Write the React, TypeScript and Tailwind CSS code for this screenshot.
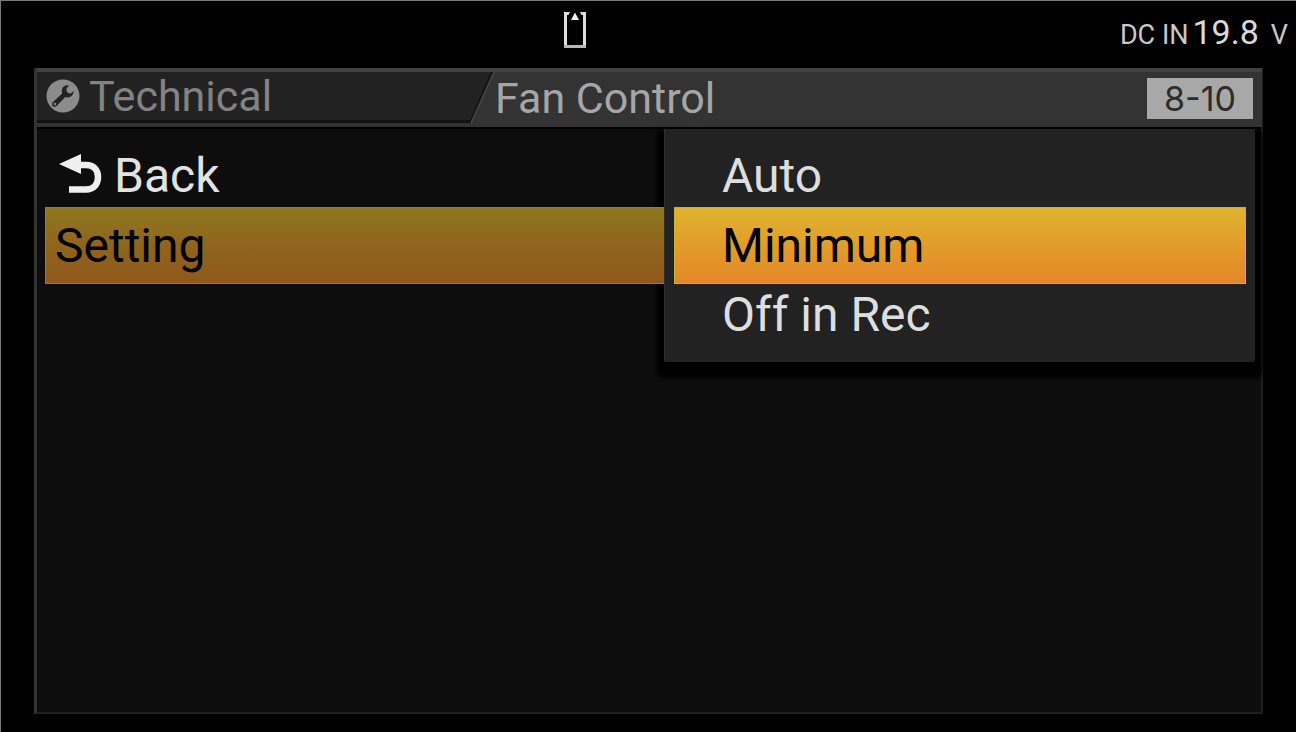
import { useState } from 'react'

const options = ['Auto', 'Minimum', 'Off in Rec']

export default function App() {
  const [selected, setSelected] = useState('Minimum')

  return (
    <div className="flex min-h-screen flex-col border-l border-t border-[#7a7a7a] bg-black font-['Roboto','Liberation_Sans',sans-serif]">
      <StatusBar />

      <main className="mb-[18px] ml-[33px] mr-[33px] flex grow flex-col border-b-2 border-l-3 border-r-2 border-b-[#202020] border-l-[#333333] border-r-[#202020] bg-[#0d0d0d]">
        <Header />

        <div className="flex items-start border-t-2 border-black">
          <nav className="min-w-0 grow pl-2 pt-4">
            <button className="flex h-[62px] w-full items-center pl-[14px] text-5xl font-[450] text-[#e2e2e2]">
              <BackIcon />
              <span className="ml-3">Back</span>
            </button>
            <button className="relative z-10 flex h-[77px] w-full items-center border border-r-0 border-[#8f8420] bg-linear-to-b from-[#8f7820] via-[#8f651d] to-[#90581a] pl-[9px] text-5xl font-[450] text-black">
              Setting
            </button>
          </nav>

          <div
            role="listbox"
            aria-label="Setting"
            className="mr-[6px] w-[591px] max-w-1/2 rounded-b-[2px] border-l border-[#2e2e2e] bg-[#222222] px-[9px] pb-4 pt-4 shadow-[0_9px_4px_7px_#000]"
          >
            {options.map((name) => (
              <button
                key={name}
                role="option"
                aria-selected={name === selected}
                onClick={() => setSelected(name)}
                className={
                  name === selected
                    ? 'flex h-[77px] w-full items-center border border-[#c9b52c] bg-linear-to-b from-[#dfb42f] via-[#e29c2b] to-[#e38729] pl-[47px] text-5xl font-[450] text-black'
                    : 'flex h-[62px] w-full items-center border-x border-transparent pl-[47px] text-5xl font-[450] text-[#dedede]'
                }
              >
                {name}
              </button>
            ))}
          </div>
        </div>
      </main>
    </div>
  )
}

function StatusBar() {
  return (
    <div className="flex h-[67px] items-start justify-between pl-[43.5%] pr-2">
      <svg className="mt-[10px] h-[38px] w-[22px]" viewBox="0 0 22 38" aria-label="Media slot">
        <path d="M0 1H6L4.500 4H3V34H19V4H17.500L16 1H22V37H0Z" fill="#dedede" />
        <path d="M0 34H22V37H0Z" fill="#b8b8b8" />
        <path d="M11 1.500L15 9H7Z" fill="#f0f0f0" />
      </svg>
      <p className="flex items-baseline pt-[11px] text-[27px] leading-10 text-[#c8c8c8]">
        DC IN
        <span className="ml-1 text-[34px] text-[#d8d8d8]">19.8</span>
        <span className="ml-3">V</span>
      </p>
    </div>
  )
}

function Header() {
  return (
    <header className="-mr-px flex h-[59px] items-start border-t-4 border-[#424242] bg-[#333333]">
      <div className="flex h-[51px] w-[432px] items-center border-b-3 border-[#121212] bg-[#222222] pl-[9px] text-[43px] font-[450] text-[#838383]">
        <WrenchIcon />
        <h2 className="ml-[9px]">Technical</h2>
      </div>
      {/* slanted end of the parent tab */}
      <svg className="h-[55px] w-[26px] shrink-0" viewBox="0 0 26 55">
        <path d="M0 0H24L0 49Z" fill="#222222" />
        <path d="M0 48H1L22 0H25L2 51H0Z" fill="#101010" />
        <path d="M25 0L2 51" fill="none" stroke="#484848" strokeWidth="1.5" />
      </svg>
      <h1 className="text-[43px] font-[450] leading-[53px] text-[#a6a6a6]">Fan Control</h1>
      <span className="ml-auto mr-[9px] mt-[6px] flex h-[41px] w-[106px] items-center justify-center bg-[#a8a8a8] font-['Inter','Liberation_Sans',sans-serif] text-[34px] text-[#2c2c2c]">
        8-10
      </span>
    </header>
  )
}

function WrenchIcon() {
  return (
    <svg className="size-[34px]" viewBox="0 0 34 34" aria-hidden="true">
      <circle cx="17" cy="17" r="16.5" fill="#8c8c8c" />
      <path
        d="M27.600 11.500C26.800 13.500 25 14.800 23 14.300C20.600 13.700 19.800 11.200 20.800 9L23 6.500C19.500 5.600 16.400 7.500 15.800 11C15.600 12.400 15.800 13.500 16.200 14.400L7 23C5.600 24.400 5.800 26.200 6.900 27.200C8 28.200 9.700 28 10.900 26.700L19.300 18C23.800 19.600 28 16.300 27.600 11.500Z"
        fill="#232323"
      />
      <circle cx="8.900" cy="25" r="1.200" fill="#8c8c8c" />
    </svg>
  )
}

function BackIcon() {
  return (
    <svg className="h-[44px] w-[43px]" viewBox="0 0 43 44" aria-hidden="true">
      <path d="M0 10L22 0V20Z" fill="#efefef" />
      <path d="M20 11H27C34.500 11 39 15.500 39 23C39 30.500 34.500 35.500 27 35.500H10" fill="none" stroke="#efefef" strokeWidth="6.500" />
    </svg>
  )
}
